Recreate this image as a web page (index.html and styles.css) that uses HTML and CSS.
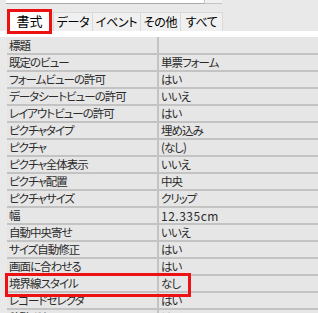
FILE: index.html
```html
<!DOCTYPE html>
<html lang="ja">
<head>
<meta charset="utf-8">
<link rel="stylesheet" href="styles.css">
</head>
<body>
<div class="sheet">
  <div class="topbar">
    <div class="combo"><div class="combo-btn"></div></div>
  </div>
  <div class="tabs">
    <div class="tab active">書式</div>
    <div class="tab t-data">データ</div>
    <div class="tab t-event">イベント</div>
    <div class="tab t-other">その他</div>
    <div class="tab t-all">すべて</div>
  </div>
  <div class="strip"></div>
  <div class="grid">
    <div class="cell head">標題</div><div class="cell head"></div>
    <div class="cell">既定のビュー</div><div class="cell">単票フォーム</div>
    <div class="cell">フォームビューの許可</div><div class="cell">はい</div>
    <div class="cell">データシートビューの許可</div><div class="cell">いいえ</div>
    <div class="cell">レイアウトビューの許可</div><div class="cell">はい</div>
    <div class="cell">ピクチャタイプ</div><div class="cell">埋め込み</div>
    <div class="cell">ピクチャ</div><div class="cell">(なし)</div>
    <div class="cell">ピクチャ全体表示</div><div class="cell">いいえ</div>
    <div class="cell">ピクチャ配置</div><div class="cell">中央</div>
    <div class="cell">ピクチャサイズ</div><div class="cell">クリップ</div>
    <div class="cell">幅</div><div class="cell num">12.335cm</div>
    <div class="cell">自動中央寄せ</div><div class="cell">いいえ</div>
    <div class="cell">サイズ自動修正</div><div class="cell">はい</div>
    <div class="cell">画面に合わせる</div><div class="cell">はい</div>
    <div class="cell">境界線スタイル</div><div class="cell">なし</div>
    <div class="cell">レコードセレクタ</div><div class="cell">はい</div>
    <div class="cell">移動ボタン</div><div class="cell">はい</div>
  </div>
  <div class="mark mark-tab"></div>
  <div class="mark mark-row"></div>
</div>
</body>
</html>
```

FILE: styles.css
```css
html, body {
  margin: 0;
  padding: 0;
  background: #ffffff;
}
body {
  width: 318px;
  height: 313px;
  overflow: hidden;
  font-family: "Noto Sans CJK JP", "Noto Sans", sans-serif;
  font-size: 12px;
  font-feature-settings: "palt";
  color: #1a1a1a;
}
.sheet {
  position: relative;
  height: 313px;
  overflow: hidden;
  background: #e9e9e9;
}
.topbar {
  height: 4px;
  padding-left: 6px;
}
.combo {
  position: relative;
  width: 216px;
  height: 3px;
  background: #ffffff;
  border-bottom: 1px solid #a9a9a9;
}
.combo-btn {
  position: absolute;
  right: 0;
  top: 0;
  width: 17px;
  height: 3px;
  border-left: 1px solid #c4c4c4;
  border-bottom: 1px solid #c4c4c4;
  background: #f0f0f0;
}
.tabs {
  display: flex;
  align-items: flex-end;
  height: 27px;
  padding-left: 8px;
}
.tab {
  box-sizing: border-box;
  height: 19px;
  line-height: 18px;
  text-align: center;
  background: #f0f0f0;
  border: 1px solid #d9d9d9;
  border-bottom: none;
  margin-right: -1px;
  color: #000;
  letter-spacing: -0.3px;
}
.tab.active {
  width: 43px;
  height: 21px;
  line-height: 20px;
  background: #ffffff;
  font-size: 13px;
  letter-spacing: 0;
  margin-right: 2px;
}
.t-data { width: 40px; }
.t-event { width: 49px; }
.t-other { width: 41px; }
.t-all { width: 43px; }
.strip {
  height: 6px;
  background: #ffffff;
}
.grid {
  display: grid;
  grid-template-columns: 150px 1fr;
  column-gap: 2px;
  row-gap: 2px;
  margin-left: 7px;
  background: #c3c3c3;
}
.cell {
  height: 15px;
  line-height: 15px;
  padding-left: 2px;
  background: #e6e6e6;
  color: #2b2b2b;
  font-size: 11.5px;
  letter-spacing: -1px;
  white-space: nowrap;
  overflow: hidden;
}
.cell.num {
  font-size: 12px;
  letter-spacing: 0.5px;
}
.cell.head {
  height: 16px;
  line-height: 16px;
}
.mark {
  position: absolute;
  border: 3px solid #ee1111;
  box-sizing: border-box;
}
.mark-tab {
  left: 7px;
  top: 9px;
  width: 45px;
  height: 25px;
}
.mark-row {
  left: 5px;
  top: 273px;
  width: 186px;
  height: 24px;
}
```
